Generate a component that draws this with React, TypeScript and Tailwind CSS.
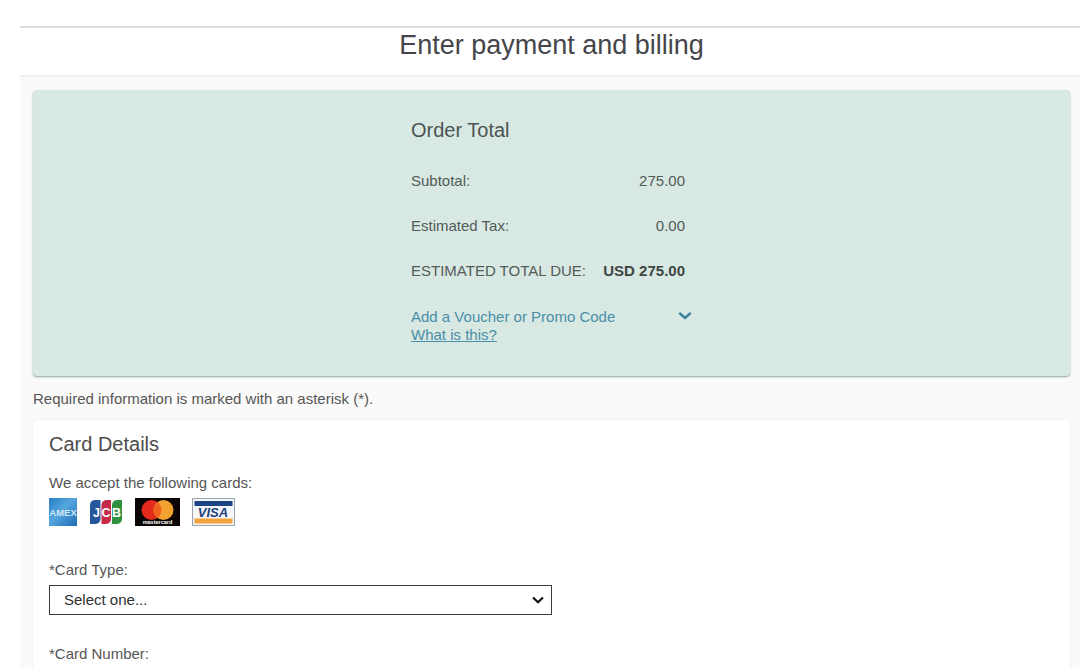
import { useState } from "react";

const TOTALS = [
  { label: "Subtotal:", value: "275.00" },
  { label: "Estimated Tax:", value: "0.00" },
  { label: "ESTIMATED TOTAL DUE:", value: "USD 275.00", strong: true },
];

const CARDS = ["American Express", "JCB", "Mastercard", "Visa"];

export default function App() {
  return (
    <div className="h-screen overflow-y-auto bg-white pl-5 pt-[26px] font-['Liberation_Sans',Arial,sans-serif] text-[15px] leading-[18px] text-[#565656] [scrollbar-width:none]">
      <header className="border-t-2 border-[#dcdcdc] pb-3 pl-[13px] pr-[10px]">
        <h1 className="text-center text-[27px] leading-[35px] text-[#45454a]">Enter payment and billing</h1>
      </header>
      <main className="border-t-2 border-[#efefef] bg-[#fafafa] pl-[13px] pr-[10px] pt-[13px]">
        <OrderTotal />
        <p className="mt-[14px]">Required information is marked with an asterisk (*).</p>
        <CardDetails />
      </main>
    </div>
  );
}

function OrderTotal() {
  const [open, setOpen] = useState(false);

  return (
    <section className="rounded-[4px] bg-[#d8e8e2] pb-8 pt-7 shadow-[0_1px_2px_#8fa39c]">
      <div className="mx-auto w-[281px]">
        <h2 className="text-xl leading-6 text-[#4b5452]">Order Total</h2>
        <table className="mt-4 w-[274px]">
          <tbody>
            {TOTALS.map((row) => (
              <tr key={row.label} className="h-[45px] whitespace-nowrap">
                <th scope="row" className="p-0 text-left font-normal text-[#535b59]">
                  {row.label}
                </th>
                <td className={`p-0 text-right ${row.strong ? "font-bold text-[#3e4644]" : "text-[#535b59]"}`}>
                  {row.value}
                </td>
              </tr>
            ))}
          </tbody>
        </table>
        <button
          type="button"
          aria-expanded={open}
          onClick={() => setOpen(!open)}
          className="mt-[15px] flex w-full items-center justify-between text-[#4a8fa8]"
        >
          Add a Voucher or Promo Code
          <svg viewBox="0 0 14 10" className="h-[10px] w-[14px]" fill="none" stroke="#3b83a0" strokeWidth="2.4">
            <path d="M2 1.500l5 4.500L12 1.500" strokeLinecap="round" strokeLinejoin="round" />
          </svg>
        </button>
        <a href="#voucher" className="text-[#4a8fa8] underline">
          What is this?
        </a>
      </div>
    </section>
  );
}

function CardDetails() {
  return (
    <section className="mt-3 rounded-[4px] bg-white px-4 pb-8 pt-3 shadow-[0_0_2px_#e4e4e4]">
      <h2 className="text-xl leading-6 text-[#4b4b4b]">Card Details</h2>
      <p className="mt-[18px]">We accept the following cards:</p>
      <ul className="mt-[6px] flex gap-3" aria-label={CARDS.join(", ")}>
        <li>
          <AmexLogo />
        </li>
        <li>
          <JcbLogo />
        </li>
        <li>
          <MastercardLogo />
        </li>
        <li>
          <VisaLogo />
        </li>
      </ul>

      <label htmlFor="card-type" className="mt-[35px] block">
        *Card Type:
      </label>
      <div className="relative mt-[6px] w-[503px] max-w-full">
        <select
          id="card-type"
          className="h-[30px] w-full appearance-none border border-[#3c3c3c] bg-white pl-[14px] pr-8 text-[15px] text-[#303030]"
        >
          <option>Select one...</option>
        </select>
        <svg
          viewBox="0 0 12 8"
          className="pointer-events-none absolute right-2 top-[11px] h-2 w-3"
          fill="none"
          stroke="#111"
          strokeWidth="2.2"
        >
          <path d="M1 1.500l5 4.800L11 1.500" />
        </svg>
      </div>

      <label htmlFor="card-number" className="mt-[30px] block">
        *Card Number:
      </label>
      <input
        id="card-number"
        type="text"
        className="mt-[6px] h-[30px] w-[503px] max-w-full border border-[#3c3c3c] bg-white px-[14px]"
      />
    </section>
  );
}

const LOGO_FONT = "'Liberation Sans', Arial, sans-serif";

function AmexLogo() {
  return (
    <svg viewBox="0 0 28 28" className="h-7 w-7">
      <defs>
        <linearGradient id="amex" x1="0" y1="0" x2="1" y2="1">
          <stop offset="0" stopColor="#2a7fc4" />
          <stop offset="0.45" stopColor="#55a6de" />
          <stop offset="1" stopColor="#1c6bb4" />
        </linearGradient>
      </defs>
      <rect width="28" height="28" fill="url(#amex)" />
      <text x="14" y="17.500" textAnchor="middle" fontFamily={LOGO_FONT} fontSize="9.500" fontWeight="700" fill="#cfe6f6">
        AMEX
      </text>
    </svg>
  );
}

function JcbLogo() {
  return (
    <svg viewBox="0 0 34 28" className="h-7 w-[34px]">
      <path d="M7 2h4.500v19a5 5 0 0 1-5 5H1V7a5 5 0 0 1 6-5z" fill="#26579c" />
      <path d="M17.500 2H22v19a5 5 0 0 1-5 5h-4.500V7a5 5 0 0 1 5-5z" fill="#c52a46" />
      <path d="M28 2h5v19a5 5 0 0 1-5 5h-5V7a5 5 0 0 1 5-5z" fill="#2d9140" />
      <g fontFamily={LOGO_FONT} fontSize="12.500" fontWeight="700" fill="#fff" textAnchor="middle">
        <text x="7.500" y="18.500">J</text>
        <text x="17" y="18.500">C</text>
        <text x="27.500" y="18.500">B</text>
      </g>
    </svg>
  );
}

function MastercardLogo() {
  return (
    <svg viewBox="0 0 45 28" className="h-7 w-[45px]">
      <rect width="45" height="28" fill="#0b0506" />
      <circle cx="16.500" cy="12" r="10" fill="#e32a1c" />
      <circle cx="28.500" cy="12" r="10" fill="#f3a130" />
      <path d="M22.500 4a10 10 0 0 1 0 16 10 10 0 0 1 0-16z" fill="#f0641e" />
      <text x="22.500" y="26" textAnchor="middle" fontFamily={LOGO_FONT} fontSize="5.500" fontWeight="700" fill="#fff">
        mastercard
      </text>
    </svg>
  );
}

function VisaLogo() {
  return (
    <svg viewBox="0 0 43 28" className="h-7 w-[43px]">
      <rect x="0.500" y="0.500" width="42" height="27" fill="#f4f5f6" stroke="#9aa3ad" />
      <rect x="2.500" y="3" width="38" height="5" fill="#1d4483" />
      <rect x="2.500" y="20.500" width="38" height="5" fill="#f2a33a" />
      <text x="21" y="19" textAnchor="middle" fontFamily={LOGO_FONT} fontSize="13" fontWeight="700" fontStyle="italic" fill="#1b3f7c">
        VISA
      </text>
    </svg>
  );
}
